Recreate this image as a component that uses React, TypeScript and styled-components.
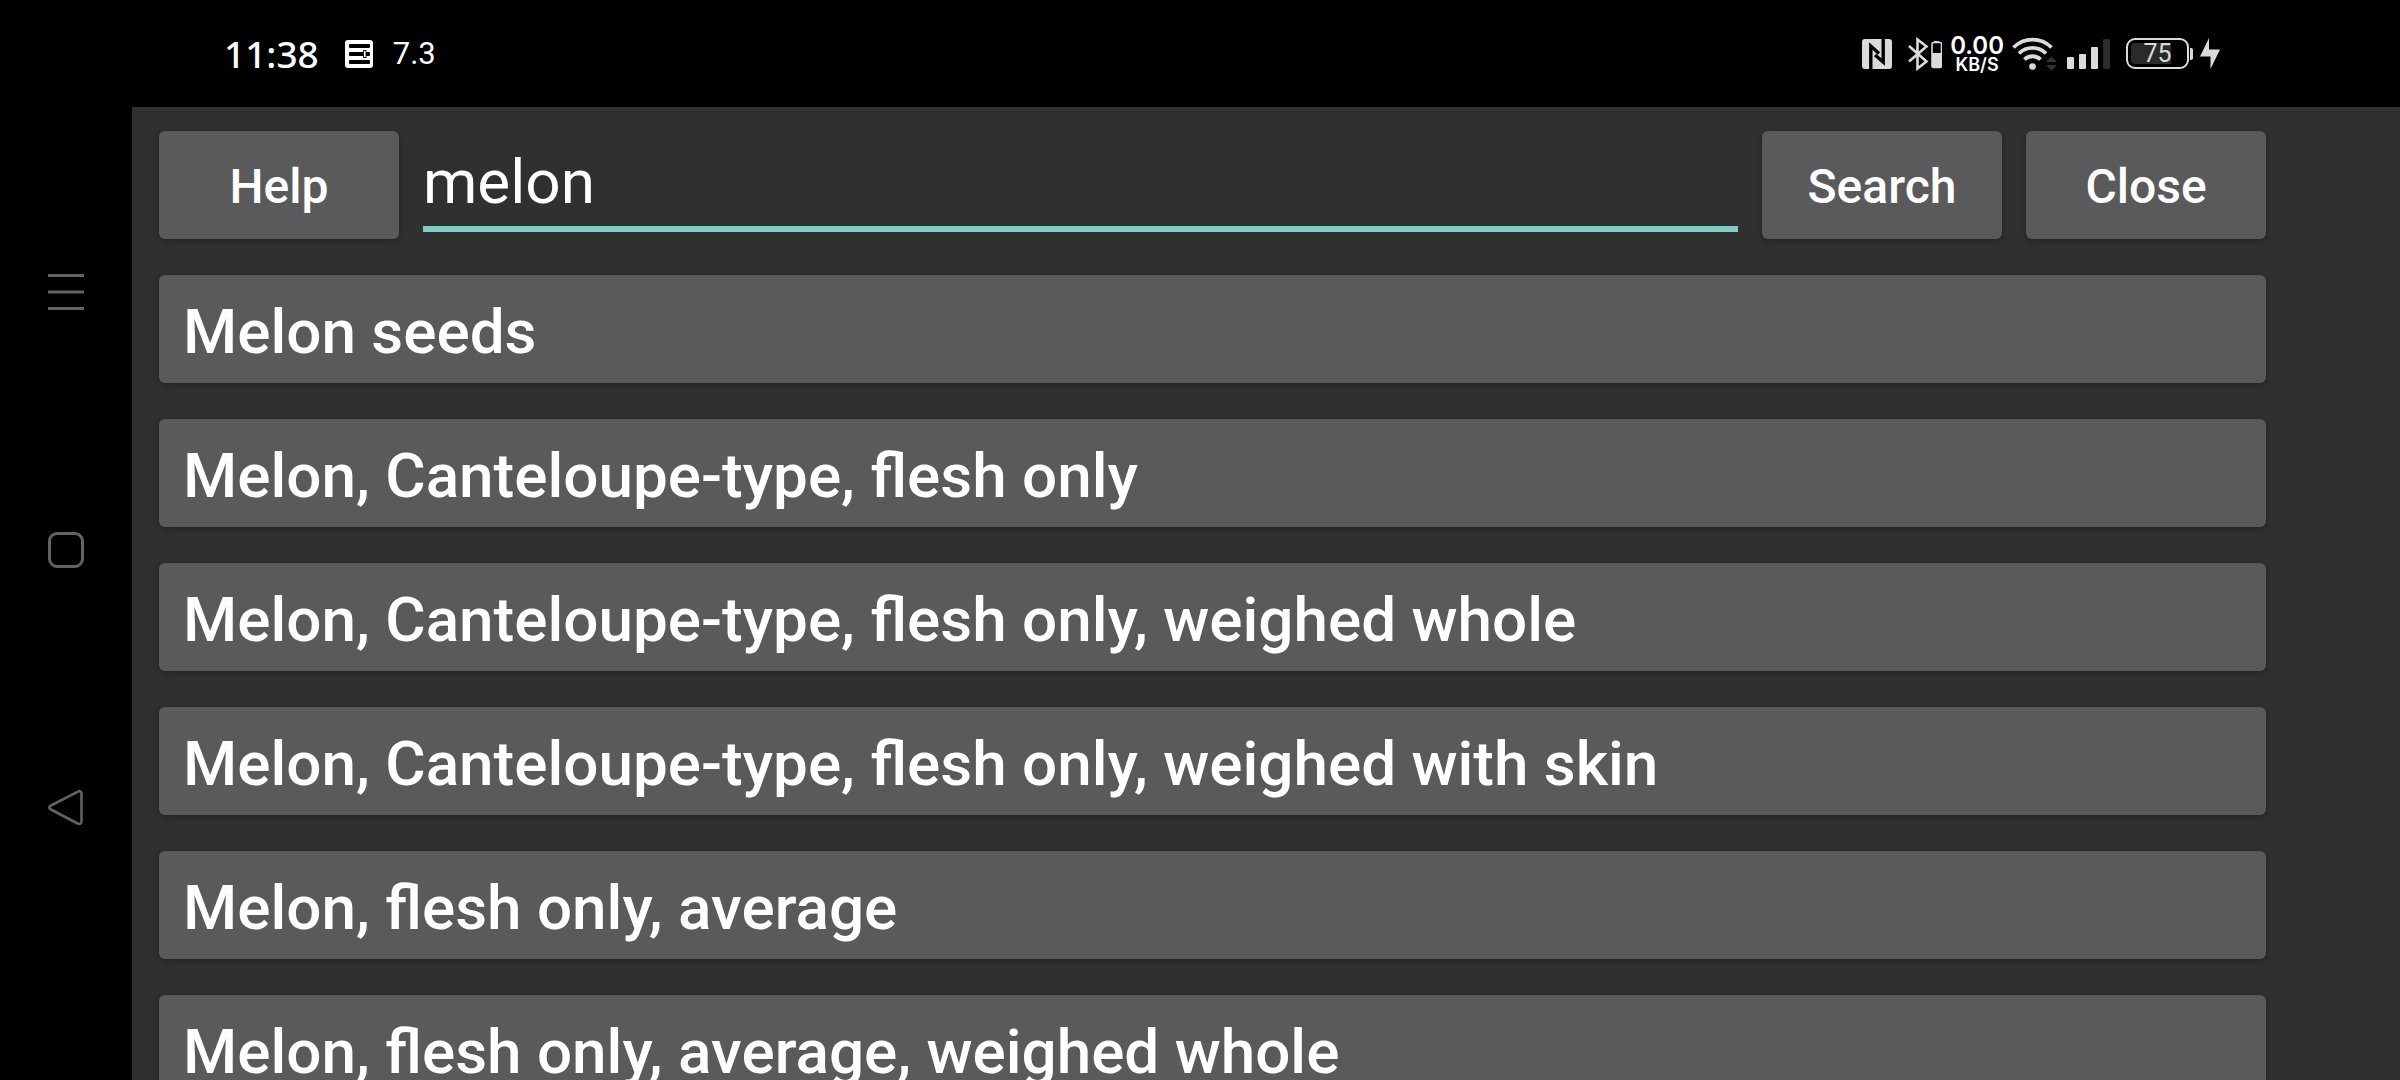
import React, { useState } from "react";
import styled, { createGlobalStyle } from "styled-components";

const GlobalStyle = createGlobalStyle`
  *, *::before, *::after { box-sizing: border-box; }
  body {
    margin: 0;
    background: #000;
    color: #fff;
    font-family: Roboto, "Liberation Sans", sans-serif;
  }
`;

const Screen = styled.div`
  display: grid;
  grid-template: auto minmax(0, 1fr) / 132px minmax(0, 1fr);
  height: 100vh;
  overflow: hidden;
`;

const StatusBar = styled.header`
  grid-column: 1 / -1;
  display: flex;
  align-items: center;
  justify-content: space-between;
  height: 107px;
  padding: 0 180px 0 224px;
`;

const StatusGroup = styled.div<{ $gap: number }>`
  display: flex;
  align-items: center;
  gap: ${(p) => p.$gap}px;
`;

const Clock = styled.time`
  font: 500 37px/44px "Noto Sans", sans-serif;
`;

const Reading = styled.span`
  font: 400 31px/44px "Liberation Sans Narrow", Roboto, sans-serif;
`;

const Speed = styled.div`
  display: flex;
  flex-direction: column;
  align-items: center;
  padding-top: 2px;
  font-family: Inter, sans-serif;
  font-weight: 600;
`;

const SpeedValue = styled.span`
  font-size: 24px;
  line-height: 20px;
`;

const SpeedUnit = styled.span`
  font-size: 18px;
  line-height: 18px;
`;

const Battery = styled.div`
  display: flex;
  align-items: center;
  gap: 1px;
  &::after {
    content: "";
    width: 3px;
    height: 12px;
    border-radius: 0 2px 2px 0;
    background: #dadada;
  }
`;

const BatteryCase = styled.div`
  width: 63px;
  height: 31px;
  padding: 3px;
  border: 2px solid #dadada;
  border-radius: 9px;
`;

const BatteryLevel = styled.div`
  height: 100%;
  border-radius: 4px;
  background: linear-gradient(to right, #2a2a2a 75%, transparent 75%);
  color: #dadada;
  font-size: 25px;
  line-height: 22px;
  text-align: center;
`;

const NavBar = styled.nav`
  display: flex;
  flex-direction: column;
  align-items: center;
  gap: 222px;
  padding-top: 167px;
`;

const NavButton = styled.button`
  display: flex;
  padding: 0;
  border: 0;
  background: none;
  color: #626262;
`;

const Content = styled.main`
  display: flex;
  flex-direction: column;
  gap: 36px;
  padding: 24px 134px 0 27px;
  overflow: hidden;
  background: #303030;
`;

const SearchForm = styled.form`
  display: flex;
  gap: 24px;
`;

const RaisedButton = styled.button`
  height: 108px;
  padding: 4px 24px 0;
  border: 0;
  border-radius: 6px;
  background: #5a5a5c;
  box-shadow: 0 2px 6px rgba(0, 0, 0, 0.3);
  color: #fff;
  font-family: inherit;
  font-weight: 500;
`;

const ActionButton = styled(RaisedButton)`
  flex: none;
  width: 240px;
  padding-top: 2px;
  font-size: 48px;
`;

const ResultButton = styled(RaisedButton)`
  display: block;
  width: 100%;
  font-size: 62px;
  text-align: left;
  white-space: nowrap;
`;

const SearchInput = styled.input`
  flex: 1;
  min-width: 0;
  height: 101px;
  padding: 6px 0 0;
  border: 0;
  border-bottom: 6px solid #80cbc4;
  border-radius: 0;
  outline: 0;
  background: none;
  color: #fff;
  font-family: inherit;
  font-size: 62px;
`;

const Results = styled.ul`
  display: flex;
  flex-direction: column;
  gap: 36px;
  margin: 0;
  padding: 0;
  list-style: none;
`;

const foods = [
  "Melon seeds",
  "Melon, Canteloupe-type, flesh only",
  "Melon, Canteloupe-type, flesh only, weighed whole",
  "Melon, Canteloupe-type, flesh only, weighed with skin",
  "Melon, flesh only, average",
  "Melon, flesh only, average, weighed whole",
];

const CardIcon = () => (
  <svg width="28" height="28" viewBox="0 0 28 28" aria-hidden="true">
    <rect width="28" height="28" rx="3" fill="#fff" />
    <rect x="4" y="4" width="21" height="4" rx="1" fill="#000" />
    <rect x="4" y="12" width="21" height="4" rx="1" fill="#000" />
    <rect x="4" y="20" width="21" height="4" rx="1" fill="#000" />
    <rect x="18.5" y="10.5" width="2.5" height="7" fill="#fff" stroke="#222" strokeWidth="1" />
  </svg>
);

const NfcIcon = () => (
  <svg width="30" height="30" viewBox="0 0 30 30" aria-hidden="true">
    <rect width="30" height="30" rx="3" fill="#dadada" />
    <path d="M8.800 30V7L17 14.400" fill="none" stroke="#000" strokeWidth="3.400" />
    <path d="M21.200 0V23L13 16" fill="none" stroke="#000" strokeWidth="3.400" />
  </svg>
);

const BluetoothIcon = () => (
  <svg width="34" height="34" viewBox="0 0 34 34" aria-hidden="true">
    <path
      d="M1 9 18.500 24.500 9.500 31.500V2.500L18.500 9.500 1 24.500"
      fill="none"
      stroke="#dadada"
      strokeWidth="2.600"
    />
    <path d="M26 4h5v2h-5z" fill="#dadada" />
    <rect x="24" y="5.500" width="9.500" height="25" rx="1.500" fill="none" stroke="#dadada" strokeWidth="1.600" />
    <path d="M24 16h10v14H24z" fill="#dadada" />
  </svg>
);

const WifiIcon = () => (
  <svg width="47" height="34" viewBox="0 0 47 34" aria-hidden="true">
    <g fill="none" stroke="#dadada" strokeWidth="3.800">
      <path d="M1.500 10.500a27 27 0 0 1 38 0" />
      <path d="M7 16.500a19 19 0 0 1 27 0" />
      <path d="M12.500 22.500a11.500 11.500 0 0 1 16 0" />
    </g>
    <circle cx="20.500" cy="29.500" r="3.300" fill="#dadada" />
    <path d="M34 25 39.500 19.500l5.500 5.500zM34 28h11L39.500 33.500z" fill="#333" />
  </svg>
);

const SignalIcon = () => (
  <svg width="43" height="30" viewBox="0 0 43 30" aria-hidden="true">
    <g fill="#dadada">
      <rect y="18" width="7" height="12" rx="1" />
      <rect x="12" y="15" width="7" height="15" rx="1" />
      <rect x="24" y="8" width="7" height="22" rx="1" />
    </g>
    <rect x="36" width="7" height="30" rx="1" fill="#2c2c2c" />
  </svg>
);

const BoltIcon = () => (
  <svg width="20" height="31" viewBox="0 0 20 31" aria-hidden="true">
    <path d="M9 0v11.500h11L10.500 31V18.500H0z" fill="#dadada" />
  </svg>
);

const MenuIcon = () => (
  <svg width="36" height="36" viewBox="0 0 36 36" aria-hidden="true">
    <path d="M0 1.500h36M0 18h36M0 34.500h36" stroke="currentColor" strokeWidth="3" />
  </svg>
);

const HomeIcon = () => (
  <svg width="36" height="36" viewBox="0 0 36 36" aria-hidden="true">
    <rect x="1.500" y="1.500" width="33" height="33" rx="7.500" fill="none" stroke="currentColor" strokeWidth="3" />
  </svg>
);

const BackIcon = () => (
  <svg width="36" height="36" viewBox="0 0 36 36" aria-hidden="true">
    <path
      d="M3 15.500 29.500 1.800Q33.500 0 33.500 4V31Q33.500 35 29.500 33.500L3 19.500Q-.500 17.500 3 15.500Z"
      fill="none"
      stroke="currentColor"
      strokeWidth="2.600"
    />
  </svg>
);

export default function App() {
  const [query, setQuery] = useState("melon");

  return (
    <Screen>
      <GlobalStyle />
      <StatusBar>
        <StatusGroup $gap={26}>
          <Clock>11:38</Clock>
          <StatusGroup $gap={20}>
            <CardIcon />
            <Reading>7.3</Reading>
          </StatusGroup>
        </StatusGroup>
        <StatusGroup $gap={16}>
          <NfcIcon />
          <StatusGroup $gap={8}>
            <BluetoothIcon />
            <Speed>
              <SpeedValue>0.00</SpeedValue>
              <SpeedUnit>KB/S</SpeedUnit>
            </Speed>
            <WifiIcon />
            <SignalIcon />
          </StatusGroup>
          <StatusGroup $gap={7}>
            <Battery>
              <BatteryCase>
                <BatteryLevel>75</BatteryLevel>
              </BatteryCase>
            </Battery>
            <BoltIcon />
          </StatusGroup>
        </StatusGroup>
      </StatusBar>
      <NavBar aria-label="System">
        <NavButton type="button" aria-label="Recent apps"><MenuIcon /></NavButton>
        <NavButton type="button" aria-label="Home"><HomeIcon /></NavButton>
        <NavButton type="button" aria-label="Back"><BackIcon /></NavButton>
      </NavBar>
      <Content>
        <SearchForm onSubmit={(e) => e.preventDefault()}>
          <ActionButton type="button">Help</ActionButton>
          <SearchInput
            aria-label="Food name"
            value={query}
            onChange={(e) => setQuery(e.target.value)}
          />
          <ActionButton type="submit">Search</ActionButton>
          <ActionButton type="button">Close</ActionButton>
        </SearchForm>
        <Results>
          {foods.map((food) => (
            <li key={food}>
              <ResultButton type="button">{food}</ResultButton>
            </li>
          ))}
        </Results>
      </Content>
    </Screen>
  );
}
